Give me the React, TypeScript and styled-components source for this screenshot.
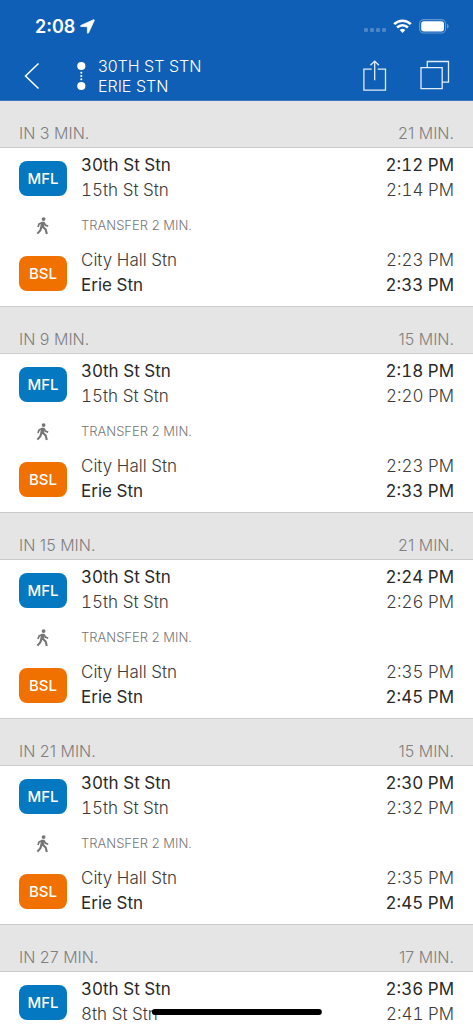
import React from 'react';
import styled, { createGlobalStyle } from 'styled-components';

const GlobalStyle = createGlobalStyle`
  *, *::before, *::after { box-sizing: border-box; }
  html, body, #root { height: 100%; }
  body {
    margin: 0;
    background: #fff;
    color: #333;
    font-family: Inter, "Liberation Sans", sans-serif;
    font-size: 17px;
    line-height: 25px;
    font-weight: 300;
    font-variant-numeric: tabular-nums;
  }
`;

const Screen = styled.div`
  display: flex;
  flex-direction: column;
  height: 100%;
  overflow: hidden;
`;

const TopBar = styled.header`
  flex: none;
  background: #0f5fb6;
  border-bottom: 1px solid #3c79bc;
  color: #fff;
`;

const StatusBar = styled.div`
  display: flex;
  align-items: center;
  justify-content: space-between;
  height: 52px;
  padding: 0 24px 0 35px;
`;

const Clock = styled.div`
  display: flex;
  align-items: center;
  gap: 5px;
  font-size: 18px;
  font-weight: 600;
  font-variant-numeric: normal;
`;

const StatusIcons = styled.div`
  display: flex;
  align-items: center;
  gap: 7px;
`;

const NavBar = styled.nav`
  display: flex;
  align-items: center;
  height: 48px;
  padding: 0 23px 0 18px;
`;

const IconButton = styled.button`
  display: flex;
  padding: 0;
  border: 0;
  background: none;
  color: inherit;
  cursor: pointer;
`;

const RouteTitle = styled.h1`
  display: flex;
  flex: 1;
  align-items: center;
  gap: 12px;
  margin: 0;
  padding-left: 33px;
  font-size: 16px;
  line-height: 20px;
  font-weight: 300;
  font-variant-numeric: normal;
`;

const Stops = styled.span`
  display: flex;
  flex-direction: column;
`;

const Actions = styled.div`
  display: flex;
  gap: 32px;
`;

const TripList = styled.main`
  flex: 1;
  min-height: 0;
  overflow: hidden;
`;

const Trip = styled.section`
  & + & { border-top: 1px solid #cbcbcb; }
`;

const TripHeader = styled.h2`
  display: flex;
  align-items: flex-end;
  justify-content: space-between;
  height: 47px;
  margin: 0;
  padding: 0 19px 4px;
  background: #e5e5e5;
  border-bottom: 1px solid #cbcbcb;
  color: #808080;
  font-size: 16px;
  line-height: 20px;
  font-weight: 300;
  font-variant-numeric: normal;
`;

const TripBody = styled.div`
  padding: 5px 19px 8px;
`;

const Row = styled.div`
  display: grid;
  grid-template-columns: 48px 1fr auto;
  align-items: center;
  column-gap: 14px;
`;

const LineBadge = styled.span<{ $color: string }>`
  display: flex;
  align-items: center;
  justify-content: center;
  height: 35px;
  border-radius: 8px;
  background: ${(p) => p.$color};
  color: #fff;
  font-size: 15px;
  font-weight: 500;
`;

const Column = styled.div<{ $end?: boolean }>`
  display: flex;
  flex-direction: column;
  text-align: ${(p) => (p.$end ? 'right' : 'left')};
`;

const Entry = styled.span<{ $strong: boolean }>`
  color: ${(p) => (p.$strong ? '#2a2a2a' : '#3c3c3c')};
  font-weight: ${(p) => (p.$strong ? 400 : 300)};
`;

const Transfer = styled(Row)`
  height: 45px;
  color: #777;
  font-size: 13px;
  justify-items: start;
`;

const WalkCell = styled.span`
  display: flex;
  justify-self: center;
`;

const HomeIndicator = styled.div`
  position: fixed;
  bottom: 9px;
  left: 50%;
  width: 36%;
  height: 6px;
  border-radius: 3px;
  background: #000;
  transform: translateX(-50%);
`;

const WalkIcon = () => (
  <svg width="14" height="18" viewBox="0 0 14 18" fill="none" stroke="#757575" strokeLinejoin="round" aria-hidden="true">
    <circle cx="7.6" cy="2.1" r="1.9" fill="#757575" stroke="none" />
    <path d="M5.7 5.3 8 5.3 7.4 10.3 4.9 10.3Z" fill="#757575" strokeWidth="1.3" />
    <path d="M6.4 5.4 3 7.1 2 10M8.1 5.6 9.4 8.1 12.2 9.2" strokeWidth="1.7" />
    <path d="M5.4 10.2 4.3 13.4 1.4 16.6M7 10 9.7 12.6 10.8 16.9" strokeWidth="2.1" />
  </svg>
);

type Leg = { line: 'MFL' | 'BSL'; from: string; to: string; dep: string; arr: string };

const lineColors = { MFL: '#0478c0', BSL: '#f07000' };

const LegRow = ({ leg, final }: { leg: Leg; final: boolean }) => (
  <Row>
    <LineBadge $color={lineColors[leg.line]}>{leg.line}</LineBadge>
    <Column>
      <Entry $strong={!final}>{leg.from}</Entry>
      <Entry $strong={final}>{leg.to}</Entry>
    </Column>
    <Column $end>
      <Entry $strong={!final}>{leg.dep}</Entry>
      <Entry $strong={final}>{leg.arr}</Entry>
    </Column>
  </Row>
);

const trips = [
  { wait: 3, total: 21, via: '15th St Stn', times: ['2:12', '2:14', '2:23', '2:33'] },
  { wait: 9, total: 15, via: '15th St Stn', times: ['2:18', '2:20', '2:23', '2:33'] },
  { wait: 15, total: 21, via: '15th St Stn', times: ['2:24', '2:26', '2:35', '2:45'] },
  { wait: 21, total: 15, via: '15th St Stn', times: ['2:30', '2:32', '2:35', '2:45'] },
  { wait: 27, total: 17, via: '8th St Stn', times: ['2:36', '2:41'] },
];

export default function App() {
  return (
    <Screen>
      <GlobalStyle />
      <TopBar>
        <StatusBar>
          <Clock>
            2:08
            <svg width="15" height="15" viewBox="0 0 15 15" aria-hidden="true">
              <path d="M13.5.7.9 6.4C.3 6.7.4 7.5 1 7.5L7.3 7.7 7.4 13.7c0 .7.8.8 1.1.2L14.3 1.5c.2-.6-.3-1-.8-.8Z" fill="#fff" stroke="#fff" strokeWidth=".7" strokeLinejoin="round" />
            </svg>
          </Clock>
          <StatusIcons>
            <svg width="22" height="14" viewBox="0 0 22 14" fill="#4c86c9" aria-hidden="true">
              <rect x="0" y="9" width="4" height="4" rx="1.3" />
              <rect x="6" y="9" width="4" height="4" rx="1.3" />
              <rect x="12" y="9" width="4" height="4" rx="1.3" />
              <rect x="18" y="9" width="4" height="4" rx="1.3" />
            </svg>
            <svg width="19" height="14" viewBox="0 0 19 14" fill="none" stroke="#fff" strokeWidth="2.6" aria-hidden="true">
              <path d="M1.2 5.1A11.8 11.8 0 0 1 17.8 5.1" />
              <path d="M4.1 8.5A7.7 7.7 0 0 1 14.9 8.5" />
              <path d="M9.5 13.9 6.7 11.1A4 4 0 0 1 12.3 11.1Z" fill="#fff" stroke="none" />
            </svg>
            <svg width="30" height="15" viewBox="0 0 30 15" aria-hidden="true">
              <rect x=".6" y=".6" width="26" height="13.4" rx="4.2" fill="none" stroke="#6497d1" strokeWidth="1.1" />
              <rect x="2.2" y="2.2" width="22.8" height="10.2" rx="2.7" fill="#fff" />
              <path d="M28 5v4.6c1-.3 1.7-1.2 1.7-2.3S29 5.3 28 5Z" fill="#6497d1" />
            </svg>
          </StatusIcons>
        </StatusBar>
        <NavBar>
          <IconButton aria-label="Back">
            <svg width="25" height="28" viewBox="0 0 25 28" fill="none" stroke="#fff" strokeWidth="1.5">
              <path d="M20.5 1.5 7.5 14 20.5 26.5" />
            </svg>
          </IconButton>
          <RouteTitle>
            <svg width="10" height="30" viewBox="0 0 10 30" fill="#fff" aria-hidden="true">
              <circle cx="5.3" cy="5" r="4.1" />
              <rect x="4.4" y="10.8" width="1.8" height="1.8" />
              <rect x="4.4" y="14.1" width="1.8" height="1.8" />
              <rect x="4.4" y="17.4" width="1.8" height="1.8" />
              <circle cx="5.3" cy="25" r="4.1" />
            </svg>
            <Stops>
              <span>30TH ST STN</span>
              <span>ERIE STN</span>
            </Stops>
          </RouteTitle>
          <Actions>
            <IconButton aria-label="Share">
              <svg width="25" height="32" viewBox="0 0 25 32" fill="none" stroke="#e3edf8" strokeWidth="1.3">
                <path d="M8.7 9.2H.9v21h21.600v-21H14.700M11.700 20.300V1.500M7.500 5.200 11.700 1.100l4.200 4.100" />
              </svg>
            </IconButton>
            <IconButton aria-label="Copy">
              <svg width="30" height="32" viewBox="0 0 30 32" fill="none" stroke="#e3edf8" strokeWidth="1.3">
                <path d="M1 7.7h21.200v20.900H1Z M7.300 7.700V1.500h21.200v20.700H22.200" />
              </svg>
            </IconButton>
          </Actions>
        </NavBar>
      </TopBar>
      <TripList>
        {trips.map(({ wait, total, via, times }) => (
          <Trip key={wait}>
            <TripHeader>
              <span>IN {wait} MIN.</span>
              <span>{total} MIN.</span>
            </TripHeader>
            <TripBody>
              <LegRow
                final={false}
                leg={{ line: 'MFL', from: '30th St Stn', to: via, dep: `${times[0]} PM`, arr: `${times[1]} PM` }}
              />
              {times.length > 2 && (
                <>
                  <Transfer>
                    <WalkCell><WalkIcon /></WalkCell>
                    <span>TRANSFER 2 MIN.</span>
                  </Transfer>
                  <LegRow
                    final
                    leg={{ line: 'BSL', from: 'City Hall Stn', to: 'Erie Stn', dep: `${times[2]} PM`, arr: `${times[3]} PM` }}
                  />
                </>
              )}
            </TripBody>
          </Trip>
        ))}
      </TripList>
      <HomeIndicator />
    </Screen>
  );
}
